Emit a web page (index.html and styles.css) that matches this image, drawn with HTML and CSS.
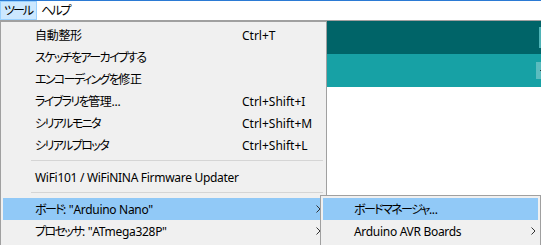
FILE: index.html
```html
<!DOCTYPE html>
<html lang="ja">
<head>
  <meta charset="utf-8">
  <title>Arduino - ツール</title>
  <link rel="stylesheet" href="styles.css">
</head>
<body>
  <div class="window">
    <div class="menubar">
      <span class="menubar-item active"><span class="kana">ツール</span></span>
      <span class="menubar-item"><span class="kana">ヘルプ</span></span>
    </div>

    <div class="app">
      <div class="toolbar">
        <span class="toolbar-btn"></span>
      </div>
      <div class="tabs">
        <span class="tab-menu"><span class="tab-menu-mark"></span></span>
      </div>
      <div class="editor"></div>
    </div>

    <!-- ツール dropdown -->
    <div class="menu main-menu">
      <div class="menu-item"><span class="label">自動整形</span><span class="shortcut">Ctrl+T</span></div>
      <div class="menu-item"><span class="label"><span class="kana">スケッチをアーカイブする</span></span></div>
      <div class="menu-item"><span class="label"><span class="kana">エンコーディングを</span>修正</span></div>
      <div class="menu-item"><span class="label"><span class="kana">ライブラリを</span>管理...</span><span class="shortcut">Ctrl+Shift+I</span></div>
      <div class="menu-item"><span class="label"><span class="kana">シリアルモニタ</span></span><span class="shortcut">Ctrl+Shift+M</span></div>
      <div class="menu-item"><span class="label"><span class="kana">シリアルプロッタ</span></span><span class="shortcut">Ctrl+Shift+L</span></div>
      <div class="menu-sep"></div>
      <div class="menu-item"><span class="label">WiFi101 / WiFiNINA Firmware Updater</span></div>
      <div class="menu-sep"></div>
      <div class="menu-item selected">
        <span class="label"><span class="kana">ボード</span>: "Arduino Nano"</span><span class="shortcut"></span>
        <svg class="arrow" width="5" height="8" viewBox="0 0 5 8"><polyline points="0.5,0.5 4,4 0.5,7.5" /></svg>
      </div>
      <div class="menu-item">
        <span class="label"><span class="kana">プロセッサ</span>: "ATmega328P"</span><span class="shortcut"></span>
        <svg class="arrow" width="5" height="8" viewBox="0 0 5 8"><polyline points="0.5,0.5 4,4 0.5,7.5" /></svg>
      </div>
    </div>

    <!-- ボード submenu -->
    <div class="menu sub-menu">
      <div class="menu-item selected"><span class="label"><span class="kana">ボードマネージャ</span>...</span></div>
      <div class="menu-item">
        <span class="label">Arduino AVR Boards</span>
        <svg class="arrow" width="5" height="8" viewBox="0 0 5 8"><polyline points="0.5,0.5 4,4 0.5,7.5" /></svg>
      </div>
    </div>
  </div>
</body>
</html>
```

FILE: styles.css
```css
* {
  box-sizing: border-box;
}

html, body {
  margin: 0;
  height: 100%;
  overflow: hidden;
}

body {
  font-family: 'Noto Sans', 'Noto Sans CJK JP', sans-serif;
  font-size: 12px;
  font-feature-settings: "palt";
  color: #000;
  background: #fff;
}

/* katakana in the Windows UI font is much narrower */
.kana {
  letter-spacing: -1.6px;
}

.window {
  position: relative;
  height: 100%;
  border-top: 1px solid #2b7ad4;
  display: flex;
  flex-direction: column;
}

/* menu bar */
.menubar {
  height: 19px;
  display: flex;
  background: #fff;
}

.menubar-item {
  height: 19px;
  line-height: 17px;
  padding: 0 4px 0 3px;
  border: 1px solid transparent;
}

.menubar-item .kana {
  letter-spacing: -2px;
}

.menubar-item.active {
  background: #cce8ff;
  border-color: #99d1ff;
}

/* app area under the menus */
.app {
  flex: 1;
  display: flex;
  flex-direction: column;
  border-top: 1px solid #a0a0a0;
}

.toolbar {
  height: 33px;
  background: #006468;
  display: flex;
  justify-content: flex-end;
}

.toolbar-btn {
  width: 22px;
  height: 21px;
  margin-top: 6px;
  margin-right: -20px;
  background: #4fb3b6;
}

.tabs {
  height: 33px;
  background: #17a1a5;
  display: flex;
  justify-content: flex-end;
}

.tab-menu {
  width: 20px;
  height: 17px;
  margin-top: 8px;
  margin-right: -15px;
  background: #5bbcbf;
  display: flex;
  align-items: center;
  padding-left: 4px;
}

.tab-menu-mark {
  width: 5px;
  height: 1px;
  background: #1d3a3b;
}

.editor {
  flex: 1;
  background: #fff;
}

/* dropdown menus */
.menu {
  position: absolute;
  background: #f0f0f0;
  border: 1px solid #a0a0a0;
  padding: 2px;
}

.main-menu {
  top: 20px;
  left: 0;
  width: 327px;
  height: 240px;
}

.sub-menu {
  top: 194px;
  left: 320px;
  width: 221px;
  height: 60px;
}

.menu-item {
  height: 22px;
  display: grid;
  grid-template-columns: 207px 1fr 5px;
  align-items: center;
  padding: 0 3px 0 32px;
  white-space: nowrap;
}

.sub-menu .menu-item {
  grid-template-columns: 1fr 5px;
  padding: 0 2px 0 31px;
}

.menu-item .label {
  letter-spacing: -0.3px;
}

.menu-item .label .kana {
  letter-spacing: -1.6px;
}

.menu-item.selected {
  background: #91c9f7;
}

.menu-item .arrow {
  grid-column: -2;
  fill: none;
  stroke: #333;
  stroke-width: 1;
}

.menu-sep {
  margin: 4px 1px 5px 28px;
  border-top: 1px solid #d5d5d5;
}
```
